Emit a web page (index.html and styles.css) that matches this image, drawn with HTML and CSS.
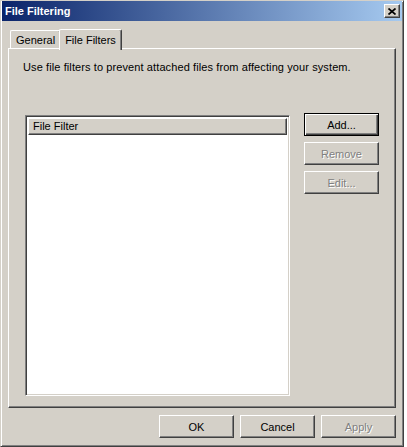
FILE: index.html
```html
<!DOCTYPE html>
<html lang="en">
<head>
    <meta charset="UTF-8">
    <title>File Filtering</title>
    <link rel="stylesheet" href="styles.css">
</head>
<body>
    <div class="window">
        <div class="titlebar">
            <span class="title">File Filtering</span>
            <button class="close" title="Close">
                <svg width="8" height="7" viewBox="0 0 8 7">
                    <path d="M0.5 0.5 L7.5 6.5 M7.5 0.5 L0.5 6.5" stroke="#000" stroke-width="1.7" fill="none"/>
                </svg>
            </button>
        </div>
        <div class="content">
            <div class="tabs">
                <div class="tab">General</div>
                <div class="tab selected">File Filters</div>
            </div>
            <div class="panel">
                <p class="intro">Use file filters to prevent attached files from affecting your system.</p>
                <div class="main">
                    <div class="listbox">
                        <div class="list-header">File Filter</div>
                    </div>
                    <div class="side-buttons">
                        <button class="btn default">Add...</button>
                        <button class="btn" disabled>Remove</button>
                        <button class="btn" disabled>Edit...</button>
                    </div>
                </div>
            </div>
            <div class="footer">
                <button class="btn">OK</button>
                <button class="btn">Cancel</button>
                <button class="btn" disabled>Apply</button>
            </div>
        </div>
    </div>
</body>
</html>
```

FILE: styles.css
```css
body {
    margin: 0;
    background: #ffffff;
    font-family: "Liberation Sans", Arial, sans-serif;
    font-size: 11px;
    color: #000;
}
.window {
    width: 404px;
    height: 447px;
    box-sizing: border-box;
    background: #d4d0c8;
    border: 1px solid;
    border-color: #d4d0c8 #404040 #404040 #d4d0c8;
    box-shadow: inset 1px 1px #fff, inset -1px -1px #808080;
    padding: 0 1px 1px 1px;
}
.titlebar {
    height: 20px;
    display: flex;
    align-items: center;
    justify-content: space-between;
    padding: 0 2px 0 3px;
    background: linear-gradient(to right, #0a246a, #a6caf0);
}
.title {
    color: #fff;
    font-weight: bold;
    font-size: 11px;
}
.close {
    width: 16px;
    height: 14px;
    padding: 0;
    display: flex;
    align-items: center;
    justify-content: center;
    background: #d4d0c8;
    border: 1px solid;
    border-color: #fff #404040 #404040 #fff;
    box-shadow: inset -1px -1px #808080;
}
.content {
    padding: 8px 6px 0 6px;
}
.tabs {
    display: flex;
    align-items: flex-end;
    padding-left: 2px;
}
.tab {
    height: 18px;
    box-sizing: border-box;
    padding: 3px 5px 0 5px;
    border: 1px solid;
    border-bottom: none;
    border-color: #fff #404040 #404040 #fff;
    box-shadow: inset -1px 0 #808080;
    border-radius: 2px 2px 0 0;
    background: #d4d0c8;
}
.tab.selected {
    position: relative;
    z-index: 1;
    height: 21px;
    margin-bottom: -2px;
    margin-left: -2px;
    padding: 4px 5px 0 5px;
}
.panel {
    height: 360px;
    box-sizing: border-box;
    border: 1px solid;
    border-color: #fff #404040 #404040 #fff;
    box-shadow: inset -1px -1px #808080;
    padding: 12px 16px 11px 14px;
    display: flex;
    flex-direction: column;
}
.intro {
    margin: 0;
    line-height: 13px;
    letter-spacing: 0.1px;
}
.main {
    flex: 1;
    display: flex;
    gap: 14px;
    margin-top: 39px;
    margin-left: 2px;
}
.listbox {
    width: 265px;
    margin-top: 2px;
    box-sizing: border-box;
    background: #fff;
    border: 1px solid;
    border-color: #808080 #fff #fff #808080;
    box-shadow: inset 1px 1px #404040, inset -1px -1px #d4d0c8;
    padding: 2px;
}
.list-header {
    height: 17px;
    box-sizing: border-box;
    background: #d4d0c8;
    border: 1px solid;
    border-color: #fff #404040 #404040 #fff;
    box-shadow: inset -1px -1px #808080;
    padding: 1px 0 0 4px;
    line-height: 13px;
}
.side-buttons {
    display: flex;
    flex-direction: column;
    gap: 6px;
}
.btn {
    width: 75px;
    height: 23px;
    padding: 0;
    font-family: inherit;
    font-size: 11px;
    color: #000;
    background: #d4d0c8;
    border: 1px solid;
    border-color: #fff #404040 #404040 #fff;
    box-shadow: inset -1px -1px #808080;
}
.btn.default {
    border-color: #000;
    box-shadow: inset 1px 1px #fff, inset -1px -1px #404040, inset -2px -2px #808080;
}
.btn:disabled {
    color: #808080;
    text-shadow: 1px 1px #fff;
}
.footer {
    display: flex;
    justify-content: flex-end;
    gap: 6px;
    margin-top: 7px;
}
```
